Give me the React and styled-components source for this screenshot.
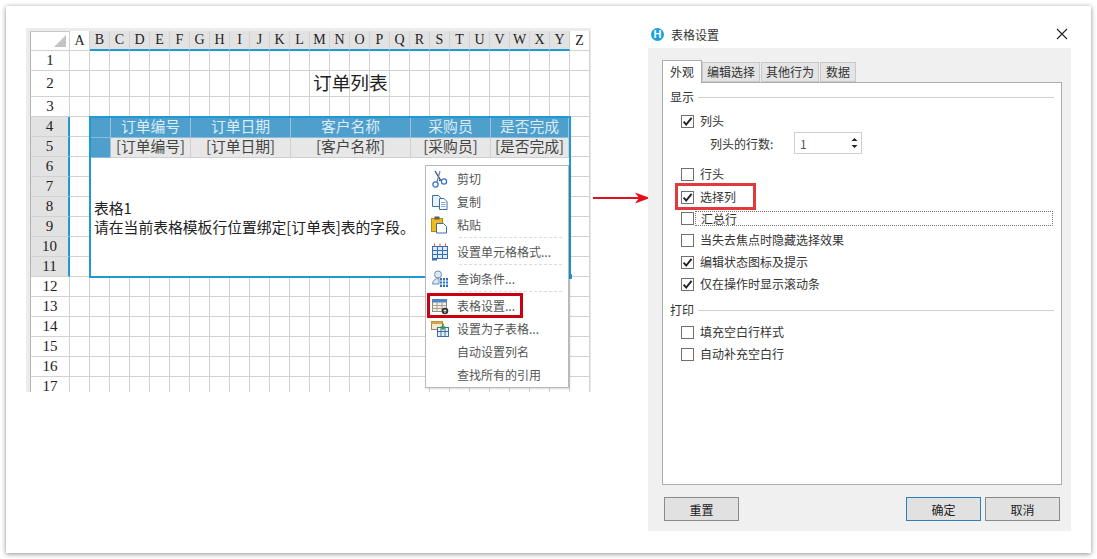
import React from 'react';
import styled, { createGlobalStyle } from 'styled-components';

const BLUE = '#1c9ad1';

const GlobalStyle = createGlobalStyle`
  html, body {
    margin: 0;
    background: #fff;
    font-family: 'Noto Sans CJK SC', 'Liberation Sans', sans-serif;
    font-size: 12px;
    color: #333;
  }
`;

const Page = styled.div`
  width: 1097px;
  height: 559px;
  padding: 6px;
  box-sizing: border-box;
  overflow: hidden;
`;

const Card = styled.div`
  display: flex;
  align-items: flex-start;
  box-sizing: border-box;
  width: 1085px;
  height: 547px;
  padding: 14px 20px 0;
  background: #fff;
  box-shadow: 0 1px 5px rgba(0, 0, 0, 0.45);
`;

/* spreadsheet */

const SheetFrame = styled.div`
  flex: none;
  box-sizing: border-box;
  width: 565px;
  height: 364px;
  margin-top: 8px;
  padding: 3px 1px 0 4px;
  background: #ececec;
`;

const Sheet = styled.div`
  position: relative;
  height: 361px;
  overflow: hidden;
  background: #fff;
`;

const Grid = styled.div`
  display: grid;
  grid-template-columns: 40px repeat(26, 20px);
  grid-template-rows: 20px 20px 26px 20px repeat(14, 20px);
`;

const Cell = styled.div`
  box-sizing: border-box;
  border-right: 1px solid #d2d2d2;
  border-bottom: 1px solid #d2d2d2;
`;

const ColHead = styled(Cell)`
  display: flex;
  align-items: center;
  justify-content: center;
  font: 14px 'Liberation Serif', serif;
  color: #222;
  background: ${(p) => (p.$sel ? '#e2e2e2' : '#fff')};
  border-bottom: ${(p) => (p.$sel ? `2px solid ${BLUE}` : '1px solid #d2d2d2')};
`;

const RowHead = styled(Cell)`
  display: flex;
  align-items: center;
  justify-content: center;
  font: 15px 'Liberation Serif', serif;
  color: #222;
  background: ${(p) => (p.$sel ? '#e2e2e2' : '#fff')};
  border-left: 1px solid #b4b4b4;
  border-right: ${(p) => (p.$sel ? `2px solid ${BLUE}` : '1px solid #d2d2d2')};
`;

const Corner = styled(Cell)`
  position: relative;
  border-left: 1px solid #b4b4b4;
  border-top: 1px solid #c8c8c8;

  &::after {
    content: '';
    position: absolute;
    right: 3px;
    bottom: 3px;
    border-style: solid;
    border-width: 0 0 12px 12px;
    border-color: transparent transparent #c4c4c4 transparent;
  }
`;

const Title = styled.div`
  position: absolute;
  left: 283px;
  top: 38px;
  font-size: 18.7px;
  line-height: 26px;
  color: #222;
`;

const TableBox = styled.div`
  position: absolute;
  left: 59px;
  top: 85px;
  box-sizing: border-box;
  width: 482px;
  height: 162px;
  border: 2px solid ${BLUE};
  background: #fff;
`;

const TableRow = styled.div`
  display: grid;
  grid-template-columns: 20px 80px 100px 120px 80px 78px;
  height: 20px;
`;

const TableCell = styled.div`
  display: flex;
  align-items: center;
  justify-content: center;
  box-sizing: border-box;
  padding-bottom: 2px;
  font-size: 14.8px;
  line-height: 1;
  white-space: nowrap;
  border-right: 1px solid ${(p) => (p.$head ? '#9cc6e0' : '#d0d0d0')};
  border-bottom: 1px solid ${(p) => (p.$head ? '#8dbcda' : '#d0d0d0')};
  color: ${(p) => (p.$head ? '#dcecf6' : '#444')};
  background: ${(p) => (p.$head ? '#4f9fcd' : '#e7e7e7')};
`;

const TableNote = styled.div`
  padding: 40px 0 0 3px;
  font-size: 14.8px;
  line-height: 19px;
  color: #222;
  white-space: nowrap;
`;

const Handle = styled.div`
  position: absolute;
  left: 538px;
  top: 243px;
  width: 4px;
  height: 5px;
  background: ${BLUE};
`;

/* context menu */

const Menu = styled.div`
  position: absolute;
  left: 395px;
  top: 134px;
  box-sizing: border-box;
  width: 144px;
  height: 223px;
  padding-top: 1px;
  background: #fff;
  border: 1px solid #b9b9b9;
  box-shadow: 1px 1px 2px rgba(0, 0, 0, 0.15);
`;

const MenuItem = styled.div`
  position: relative;
  display: flex;
  align-items: center;
  height: 23px;
  padding-left: 5px;
  font-size: 12px;
  color: #555;
  white-space: nowrap;

  &::after {
    content: '';
    display: ${(p) => (p.$marked ? 'block' : 'none')};
    position: absolute;
    left: 1px;
    top: -1px;
    width: 96px;
    height: 25px;
    box-sizing: border-box;
    border: 3px solid #c8000f;
  }
`;

const MenuIcon = styled.span`
  display: flex;
  flex: none;
  width: 18px;
  height: 18px;
  margin-right: 8px;
`;

const MenuSep = styled.div`
  box-sizing: border-box;
  height: ${(p) => p.$h || 4}px;
  margin: 0 6px 0 33px;
  padding-top: 1px;

  &::before {
    content: '';
    display: block;
    border-top: 1px dashed #dcdcdc;
  }
`;

/* arrow */

const ArrowSlot = styled.div`
  flex: none;
  display: flex;
  width: 57px;
  height: 12px;
  margin-top: 172px;
  padding-left: 2px;
  box-sizing: border-box;
  overflow: visible;
`;

/* dialog */

const Dialog = styled.div`
  flex: none;
  width: 423px;
`;

const TitleBar = styled.div`
  display: flex;
  align-items: center;
  height: 28px;
  padding: 0 3px;
  font-size: 12px;
  color: #333;
`;

const TitleIcon = styled.span`
  display: flex;
  align-items: center;
  justify-content: center;
  width: 13px;
  height: 13px;
  margin-right: 7px;
  border-radius: 50%;
  background: #1ba0dc;
  color: #fff;
  font: bold 11px 'Liberation Sans', sans-serif;
`;

const TitleText = styled.span`
  flex: 1;
`;

const DialogBody = styled.div`
  box-sizing: border-box;
  height: 483px;
  padding: 12px 9px 10px 14px;
  background: #f0f0f0;
`;

const Tabs = styled.div`
  display: flex;
  align-items: flex-end;
  height: 22px;
`;

const Tab = styled.div`
  position: relative;
  z-index: ${(p) => (p.$active ? 1 : 0)};
  display: flex;
  align-items: center;
  justify-content: center;
  box-sizing: border-box;
  width: ${(p) => p.$w}px;
  height: ${(p) => (p.$active ? 23 : 20)}px;
  margin-bottom: ${(p) => (p.$active ? -1 : 0)}px;
  margin-right: ${(p) => (p.$gap ? 1 : 0)}px;
  padding-bottom: 1px;
  font-size: 12px;
  line-height: 1;
  color: #333;
  background: ${(p) => (p.$active ? '#fff' : '#e4e4e4')};
  border: 1px solid ${(p) => (p.$active ? '#adadad' : '#c8c8c8')};
  border-bottom: ${(p) => (p.$active ? 'none' : '1px solid #c8c8c8')};
`;

const Pane = styled.div`
  box-sizing: border-box;
  height: 403px;
  background: #fff;
  border: 1px solid #adadad;
`;

const Section = styled.div`
  display: flex;
  align-items: center;
  height: 14px;
  margin-top: ${(p) => p.$top || 0}px;
  padding: 0 7px;
  font-size: 12px;
  line-height: 14px;
  color: #333;

  &::after {
    content: '';
    flex: 1;
    margin-left: 4px;
    border-top: 1px solid #d0d0d0;
  }
`;

const Option = styled.div`
  position: relative;
  display: flex;
  align-items: center;
  height: 22px;
  margin-top: ${(p) => p.$top || 0}px;
  padding: 0 8px 0 18px;
`;

const CheckBox = styled.span`
  display: flex;
  flex: none;
  align-items: center;
  justify-content: center;
  box-sizing: border-box;
  width: 13px;
  height: 13px;
  background: #fff;
  border: 1px solid #707070;
`;

const OptionLabel = styled.span`
  flex: 1;
  box-sizing: border-box;
  height: ${(p) => (p.$focus ? '15px' : 'auto')};
  margin-left: 1px;
  padding-left: 5px;
  font-size: 12px;
  line-height: ${(p) => (p.$focus ? '13px' : '16px')};
  color: #333;
  border: ${(p) => (p.$focus ? '1px dotted #777' : 'none')};
`;

const RedBox = styled.div`
  position: absolute;
  left: 12px;
  top: -3px;
  box-sizing: border-box;
  width: 81px;
  height: 27px;
  border: 3px solid #e0393e;
`;

const SpinRow = styled.div`
  display: flex;
  align-items: center;
  height: 22px;
  padding-left: 47px;
`;

const SpinLabel = styled.span`
  width: 84px;
  font-size: 12px;
  color: #333;
`;

const Spin = styled.div`
  display: flex;
  align-items: center;
  justify-content: space-between;
  box-sizing: border-box;
  width: 68px;
  height: 22px;
  padding: 0 3px 0 5px;
  font-size: 12px;
  color: #555;
  background: #fff;
  border: 1px solid #cfcfcf;
`;

const Footer = styled.div`
  display: flex;
  gap: 4px;
  margin-top: 12px;
  padding: 0 2px;
`;

const Button = styled.button`
  width: 75px;
  height: 24px;
  padding: 0;
  margin-left: ${(p) => (p.$push ? 'auto' : 0)};
  font-family: inherit;
  font-size: 12px;
  color: #222;
  background: #e1e1e1;
  border: 1px solid ${(p) => (p.$primary ? '#2b7fbd' : '#8a8a8a')};
`;

/* icons */

const Check = () => (
  <svg width="11" height="11" viewBox="0 0 11 11">
    <path d="M1.6 5.6 L4.2 8.6 L9.6 1.8" fill="none" stroke="#222" strokeWidth="1.9" />
  </svg>
);

const ScissorsIcon = () => (
  <svg width="18" height="18" viewBox="0 0 18 18" fill="none">
    <path d="M4 1 L9.5 10 L8 10.5" stroke="#33558a" strokeWidth="1.4" />
    <path d="M6 12 L9 1" stroke="#6f7f95" strokeWidth="1.2" />
    <circle cx="4.5" cy="14.5" r="2.6" stroke="#3a74c4" strokeWidth="1.3" />
    <circle cx="13" cy="11.5" r="2.6" stroke="#3a74c4" strokeWidth="1.3" />
  </svg>
);

const CopyIcon = () => (
  <svg width="18" height="18" viewBox="0 0 18 18">
    <path d="M1.5 2.5 H7.5 L9.5 4.5 V13.5 H1.5 Z" fill="#eaf1fa" stroke="#3b6ea8" />
    <path d="M8.5 5.5 H13 L16 8.5 V16.5 H8.5 Z" fill="#fff" stroke="#3b6ea8" />
    <path d="M10 9.5 H14.5 M10 11.5 H14.5 M10 13.5 H14.5" stroke="#8aa6c8" />
  </svg>
);

const PasteIcon = () => (
  <svg width="18" height="18" viewBox="0 0 18 18">
    <rect x="0.5" y="2.5" width="11" height="13" fill="#f0b91e" stroke="#b98a10" />
    <rect x="3.5" y="0.5" width="5" height="3" fill="#5c5c5c" />
    <path d="M5.5 7.5 H12.5 L15.5 10.5 V17 H5.5 Z" fill="#fff" stroke="#3b6ea8" />
  </svg>
);

const FormatIcon = () => (
  <svg width="18" height="18" viewBox="0 0 18 18">
    <rect x="1.5" y="3.5" width="15" height="12" fill="#dfe9f7" stroke="#3b6ea8" />
    <path d="M1.5 7.5 H16.5 M1.5 11.5 H16.5 M6.5 3.5 V15.5 M11.5 3.5 V15.5" stroke="#3b6ea8" />
    <path d="M3.5 0.5 V3 M9 0.5 V3 M14.5 0.5 V3" stroke="#c9743a" />
    <rect x="1" y="15" width="5" height="2.5" fill="#3b6ea8" />
  </svg>
);

const QueryIcon = () => (
  <svg width="18" height="18" viewBox="0 0 18 18">
    <circle cx="7" cy="4.5" r="3.5" fill="#dce7f4" stroke="#6f8fb5" />
    <path d="M1.5 14 C2 9.5 5 8.5 8 8.5 V14 Z" fill="#dce7f4" stroke="#6f8fb5" />
    <rect x="9" y="8" width="8" height="9" fill="#2f6fb5" />
    <path d="M11.5 8 V17 M14.5 8 V17 M9 11 H17 M9 14 H17" stroke="#fff" />
  </svg>
);

const TableSetIcon = () => (
  <svg width="18" height="18" viewBox="0 0 18 18">
    <rect x="1.5" y="2.5" width="14" height="12" fill="#f3efe8" stroke="#8a8a8a" />
    <rect x="1" y="2" width="15" height="3.5" fill="#4f86c6" />
    <path d="M1.5 8.5 H15.5 M1.5 11.5 H15.5 M6 5.5 V14.5 M11 5.5 V14.5" stroke="#a8a090" />
    <circle cx="14" cy="14" r="2.4" fill="none" stroke="#333" strokeWidth="1.8" />
  </svg>
);

const SubTableIcon = () => (
  <svg width="18" height="18" viewBox="0 0 18 18">
    <rect x="0.5" y="1.5" width="11" height="8" fill="#f4ead0" stroke="#a08a50" />
    <rect x="0.5" y="1.5" width="11" height="2.5" fill="#d9a441" />
    <rect x="6.5" y="7.5" width="11" height="9" fill="#e6f0fa" stroke="#3b6ea8" />
    <path d="M6.5 11.5 H17.5 M10 7.5 V16.5 M14 7.5 V16.5" stroke="#3b6ea8" />
    <path d="M12 3.5 V8 M10 6.5 L12 9 L14 6.5" fill="none" stroke="#2f9e3f" strokeWidth="1.5" />
  </svg>
);

const CloseIcon = () => (
  <svg width="12" height="12" viewBox="0 0 12 12">
    <path d="M1 1 L11 11 M11 1 L1 11" stroke="#222" strokeWidth="1.1" />
  </svg>
);

const SpinArrows = () => (
  <svg width="7" height="12" viewBox="0 0 7 12">
    <path d="M3.5 1 L6.5 4 H0.5 Z M3.5 11 L0.5 8 H6.5 Z" fill="#222" />
  </svg>
);

const RedArrow = () => (
  <svg width="57" height="12" viewBox="0 0 57 12" style={{ overflow: 'visible' }}>
    <path d="M0 6 H46" stroke="#e3101b" strokeWidth="2" />
    <path d="M57 6 L42 0.5 L46 6 L42 11.5 Z" fill="#e3101b" />
  </svg>
);

/* data */

const COLUMNS = 'ABCDEFGHIJKLMNOPQRSTUVWXYZ'.split('');
const ROWS = Array.from({ length: 17 }, (_, i) => i + 1);
const HEADS = ['订单编号', '订单日期', '客户名称', '采购员', '是否完成'];

const isSelCol = (c) => c !== 'A' && c !== 'Z';
const isSelRow = (r) => r >= 4 && r <= 11;

export default function App() {
  return (
    <Page>
      <GlobalStyle />
      <Card>
        <SheetFrame>
          <Sheet>
            <Grid>
              <Corner />
              {COLUMNS.map((c) => (
                <ColHead key={c} $sel={isSelCol(c)}>{c}</ColHead>
              ))}
              {ROWS.map((r) => (
                <React.Fragment key={r}>
                  <RowHead $sel={isSelRow(r)}>{r}</RowHead>
                  {COLUMNS.map((c) => (
                    <Cell key={c} />
                  ))}
                </React.Fragment>
              ))}
            </Grid>

            <Title>订单列表</Title>

            <TableBox>
              <TableRow>
                <TableCell $head />
                {HEADS.map((h) => (
                  <TableCell key={h} $head>{h}</TableCell>
                ))}
              </TableRow>
              <TableRow>
                <TableCell $head />
                {HEADS.map((h) => (
                  <TableCell key={h}>[{h}]</TableCell>
                ))}
              </TableRow>
              <TableNote>
                表格1
                <br />
                请在当前表格模板行位置绑定[订单表]表的字段。
              </TableNote>
            </TableBox>
            <Handle />

            <Menu>
              <MenuItem><MenuIcon><ScissorsIcon /></MenuIcon>剪切</MenuItem>
              <MenuItem><MenuIcon><CopyIcon /></MenuIcon>复制</MenuItem>
              <MenuItem><MenuIcon><PasteIcon /></MenuIcon>粘贴</MenuItem>
              <MenuSep />
              <MenuItem><MenuIcon><FormatIcon /></MenuIcon>设置单元格格式...</MenuItem>
              <MenuSep />
              <MenuItem><MenuIcon><QueryIcon /></MenuIcon>查询条件...</MenuItem>
              <MenuSep />
              <MenuItem $marked><MenuIcon><TableSetIcon /></MenuIcon>表格设置...</MenuItem>
              <MenuItem><MenuIcon><SubTableIcon /></MenuIcon>设置为子表格...</MenuItem>
              <MenuItem><MenuIcon />自动设置列名</MenuItem>
              <MenuItem><MenuIcon />查找所有的引用</MenuItem>
            </Menu>
          </Sheet>
        </SheetFrame>

        <ArrowSlot>
          <RedArrow />
        </ArrowSlot>

        <Dialog>
          <TitleBar>
            <TitleIcon>H</TitleIcon>
            <TitleText>表格设置</TitleText>
            <CloseIcon />
          </TitleBar>
          <DialogBody>
            <Tabs>
              <Tab $active $w={40}>外观</Tab>
              <Tab $w={58} $gap>编辑选择</Tab>
              <Tab $w={58} $gap>其他行为</Tab>
              <Tab $w={36}>数据</Tab>
            </Tabs>
            <Pane>
              <Section $top={7}>显示</Section>
              <Option $top={6}>
                <CheckBox><Check /></CheckBox>
                <OptionLabel>列头</OptionLabel>
              </Option>
              <SpinRow>
                <SpinLabel>列头的行数:</SpinLabel>
                <Spin>1<SpinArrows /></Spin>
              </SpinRow>
              <Option $top={9}>
                <CheckBox />
                <OptionLabel>行头</OptionLabel>
              </Option>
              <Option $top={1}>
                <CheckBox><Check /></CheckBox>
                <OptionLabel>选择列</OptionLabel>
                <RedBox />
              </Option>
              <Option $top={-1}>
                <CheckBox />
                <OptionLabel $focus>汇总行</OptionLabel>
              </Option>
              <Option>
                <CheckBox />
                <OptionLabel>当失去焦点时隐藏选择效果</OptionLabel>
              </Option>
              <Option>
                <CheckBox><Check /></CheckBox>
                <OptionLabel>编辑状态图标及提示</OptionLabel>
              </Option>
              <Option>
                <CheckBox><Check /></CheckBox>
                <OptionLabel>仅在操作时显示滚动条</OptionLabel>
              </Option>
              <Section $top={8}>打印</Section>
              <Option $top={4}>
                <CheckBox />
                <OptionLabel>填充空白行样式</OptionLabel>
              </Option>
              <Option>
                <CheckBox />
                <OptionLabel>自动补充空白行</OptionLabel>
              </Option>
            </Pane>
            <Footer>
              <Button>重置</Button>
              <Button $push $primary>确定</Button>
              <Button>取消</Button>
            </Footer>
          </DialogBody>
        </Dialog>
      </Card>
    </Page>
  );
}
